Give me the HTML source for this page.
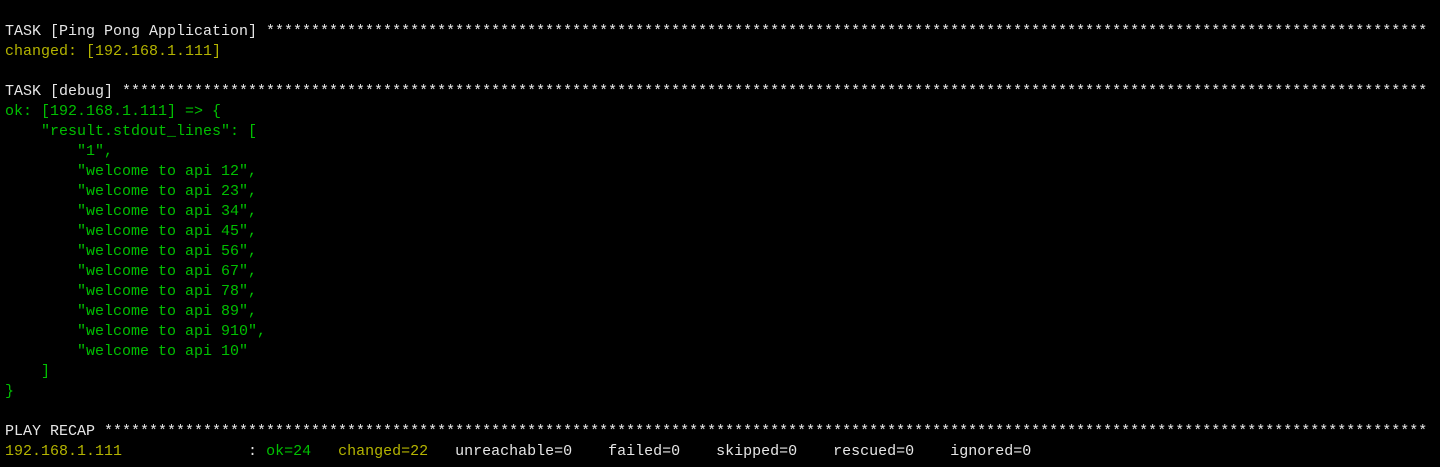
<!DOCTYPE html>
<html><head><style>
html,body{margin:0;padding:0;background:#000;width:1440px;height:467px;overflow:hidden}
pre{margin:0;position:absolute;left:5px;top:22px;font-family:"Liberation Mono",monospace;font-size:15px;line-height:20px;color:#e6e6e6;white-space:pre}
.y{color:#b4b400}.g{color:#00c000}
</style></head><body><pre>TASK [Ping Pong Application] *********************************************************************************************************************************
<span class="y">changed: [192.168.1.111]</span>

TASK [debug] *************************************************************************************************************************************************
<span class="g">ok: [192.168.1.111] =&gt; {
    "result.stdout_lines": [
        "1",
        "welcome to api 12",
        "welcome to api 23",
        "welcome to api 34",
        "welcome to api 45",
        "welcome to api 56",
        "welcome to api 67",
        "welcome to api 78",
        "welcome to api 89",
        "welcome to api 910",
        "welcome to api 10"
    ]
}</span>

PLAY RECAP ***************************************************************************************************************************************************
<span class="y">192.168.1.111</span>              : <span class="g">ok=24</span>   <span class="y">changed=22</span>   unreachable=0    failed=0    skipped=0    rescued=0    ignored=0</pre></body></html>
